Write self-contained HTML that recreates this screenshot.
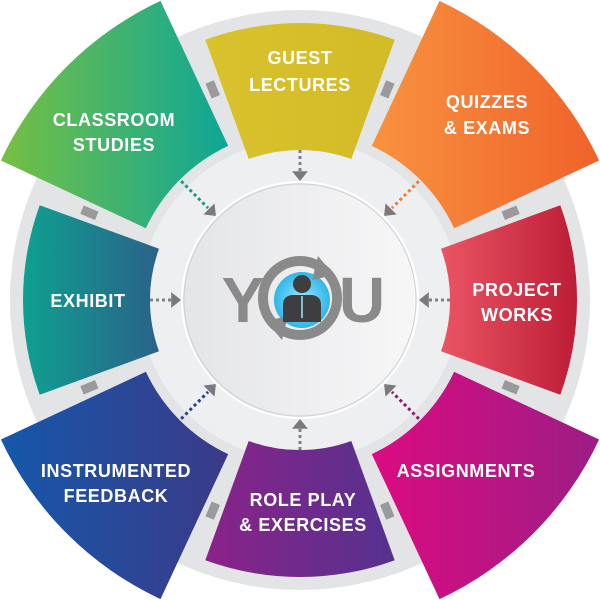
<!DOCTYPE html>
<html><head><meta charset="utf-8"><style>
html,body{margin:0;padding:0;background:#fff;width:600px;height:600px;overflow:hidden}
svg{display:block}
text{font-family:"Liberation Sans",sans-serif;font-weight:bold;fill:#fff;text-anchor:middle;letter-spacing:0.6px}
</style></head><body>
<svg id="s" width="600" height="600" viewBox="0 0 600 600">
<defs>
<linearGradient id="g0" x1="0" x2="1"><stop offset="0" stop-color="#d9c22c"/><stop offset="1" stop-color="#d2bb28"/></linearGradient>
<linearGradient id="g1" x1="0" x2="1"><stop offset="0" stop-color="#f8923f"/><stop offset="1" stop-color="#f0622a"/></linearGradient>
<linearGradient id="g2" x1="0" x2="1"><stop offset="0" stop-color="#ea5563"/><stop offset="1" stop-color="#bd1d37"/></linearGradient>
<linearGradient id="g3" x1="0" x2="1"><stop offset="0" stop-color="#dc0b82"/><stop offset="1" stop-color="#9c1d84"/></linearGradient>
<linearGradient id="g4" x1="0" x2="1"><stop offset="0" stop-color="#8b2289"/><stop offset="1" stop-color="#55328f"/></linearGradient>
<linearGradient id="g5" x1="0" x2="1"><stop offset="0" stop-color="#1558ab"/><stop offset="1" stop-color="#3b3a87"/></linearGradient>
<linearGradient id="g6" x1="0" x2="1"><stop offset="0" stop-color="#0fa090"/><stop offset="1" stop-color="#2a628a"/></linearGradient>
<linearGradient id="g7" x1="0" x2="1"><stop offset="0" stop-color="#76c043"/><stop offset="1" stop-color="#0ea697"/></linearGradient>
<linearGradient id="disc" x1="0" x2="1"><stop offset="0" stop-color="#e4e5e7"/><stop offset="1" stop-color="#f7f7f8"/></linearGradient>
<radialGradient id="blue"><stop offset="0" stop-color="#9be8ff"/><stop offset="1" stop-color="#2fb6e8"/></radialGradient>
</defs>
<circle cx="300" cy="300" r="290" fill="#e3e4e6"/>
<circle cx="300" cy="300" r="160" fill="#eeeff1"/>
<g id="spokes"></g>
<g id="segs"></g>
<circle cx="300" cy="300" r="118" fill="url(#disc)" stroke="#fff" stroke-width="2"/>
<circle cx="300" cy="300" r="116" fill="none" stroke="#cfd0d3" stroke-width="1"/>
<g id="arrows"></g>
<text x="243" y="322" style="fill:#8a8a8a;font-size:64px;letter-spacing:0">Y</text>
<text x="362" y="322" style="fill:#8a8a8a;font-size:64px;letter-spacing:0">U</text>
<circle cx="300" cy="298" r="37" fill="none" stroke="#8a8a8a" stroke-width="10"/>
<circle cx="302" cy="300" r="28" fill="url(#blue)"/>
<polygon points="318,256 334,275 312,280" fill="#8a8a8a"/>
<polygon points="282,340 266,321 288,316" fill="#8a8a8a"/>
<circle cx="302" cy="284" r="9" fill="#3e3e40"/>
<path d="M283,322 L283,305 Q283,296 292,295 L312,295 Q321,296 321,305 L321,322 Z" fill="#3e3e40"/>
<line x1="302" y1="296" x2="302" y2="318" stroke="#9be8ff" stroke-width="1.5"/>
<text x="300" y="64" font-size="18">GUEST</text>
<text x="300" y="91" font-size="18">LECTURES</text>
<text x="487" y="108" font-size="18">QUIZZES</text>
<text x="487" y="134" font-size="18">&amp; EXAMS</text>
<text x="114" y="126" font-size="18">CLASSROOM</text>
<text x="114" y="151" font-size="18">STUDIES</text>
<text x="88" y="307" font-size="18">EXHIBIT</text>
<text x="517" y="296" font-size="18">PROJECT</text>
<text x="517" y="321" font-size="18">WORKS</text>
<text x="116" y="477" font-size="18">INSTRUMENTED</text>
<text x="116" y="502" font-size="18">FEEDBACK</text>
<text x="466" y="477" font-size="18">ASSIGNMENTS</text>
<text x="303" y="506" font-size="18">ROLE PLAY</text>
<text x="303" y="531" font-size="18">&amp; EXERCISES</text>
</svg>
<script>
var ns="http://www.w3.org/2000/svg";
function pt(r,a){a=a*Math.PI/180;return [300+r*Math.sin(a),300-r*Math.cos(a)];}
function f(p){return p[0].toFixed(1)+","+p[1].toFixed(1);}
var segs=document.getElementById("segs"),sp=document.getElementById("spokes"),ar=document.getElementById("arrows");
var dot=["#808080","#f47a36","#808080","#8a1a70","#808080","#2a3e8f","#808080","#139a86"];
for(var i=0;i<8;i++){
 var c=i*45,d=i%2==0,r1=d?150:170,r2=d?277:330,a1=c-20,a2=c+20;
 var p=document.createElementNS(ns,"path");
 p.setAttribute("d","M"+f(pt(r1,a1))+" L"+f(pt(r2,a1))+" A"+r2+","+r2+" 0 0 1 "+f(pt(r2,a2))+" L"+f(pt(r1,a2))+" A"+r1+","+r1+" 0 0 0 "+f(pt(r1,a1))+"Z");
 p.setAttribute("fill","url(#g"+i+")");segs.appendChild(p);
 var g=c+22.5,l=document.createElementNS(ns,"line"),q1=pt(220,g),q2=pt(236,g);
 l.setAttribute("x1",q1[0]);l.setAttribute("y1",q1[1]);l.setAttribute("x2",q2[0]);l.setAttribute("y2",q2[1]);
 l.setAttribute("stroke","#9a9a9c");l.setAttribute("stroke-width","9");sp.appendChild(l);
 var s=pt(d?150:168,c),e=pt(d?128:130,c);
 var dl=document.createElementNS(ns,"line");
 dl.setAttribute("x1",s[0]);dl.setAttribute("y1",s[1]);dl.setAttribute("x2",e[0]);dl.setAttribute("y2",e[1]);
 dl.setAttribute("stroke",dot[i]);dl.setAttribute("stroke-width","3");dl.setAttribute("stroke-dasharray","3,3");ar.appendChild(dl);
 var t=pt(119,c),b1=pt(129,c-3.5),b2=pt(129,c+3.5);
 var tri=document.createElementNS(ns,"polygon");
 tri.setAttribute("points",f(t)+" "+f(b1)+" "+f(b2));tri.setAttribute("fill","#7a7a7c");ar.appendChild(tri);
}
</script>
</body></html>
